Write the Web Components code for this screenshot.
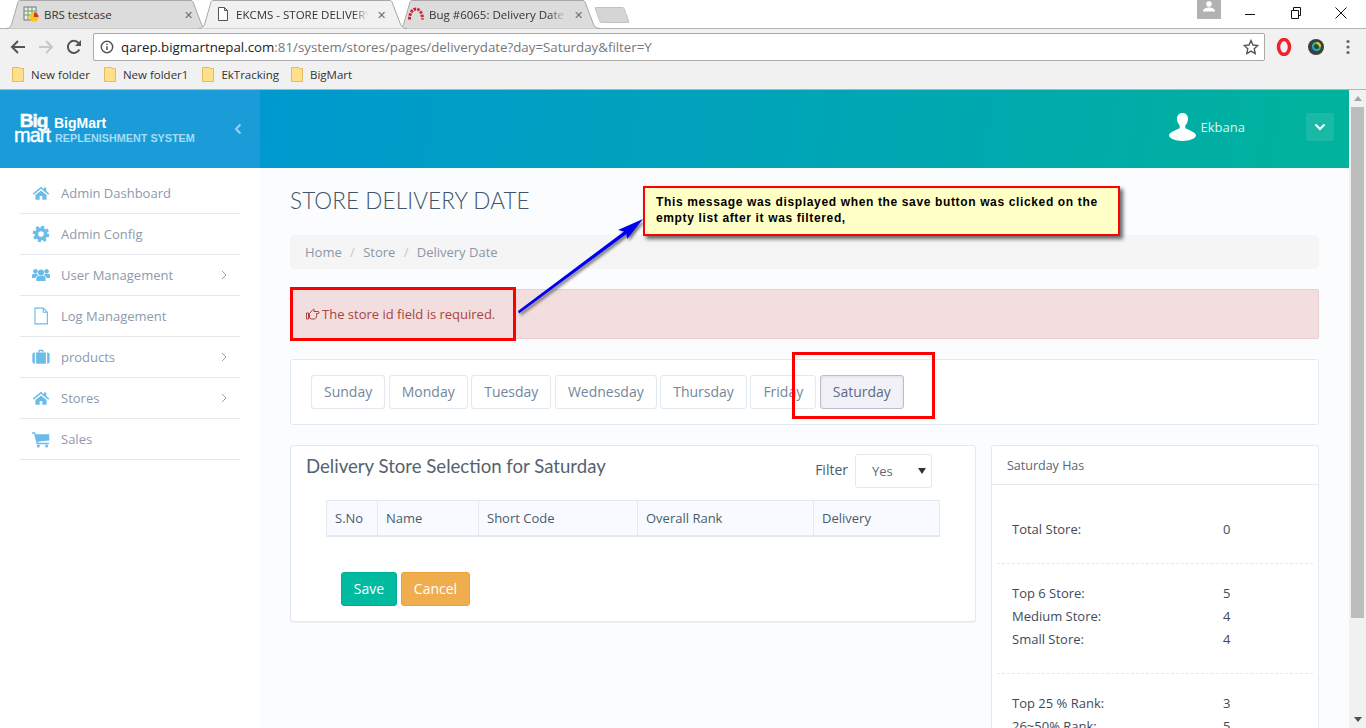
<!DOCTYPE html>
<html lang="en">
<head>
<meta charset="utf-8">
<title>EKCMS - STORE DELIVERY DATE</title>
<style>
  html, body { margin: 0; height: 728px; overflow: hidden; background: #fff; }
  body { font-family: "Open Sans", sans-serif; position: relative; }
  .page { display: flex; height: 638px; }
  .page-body { flex: 1; min-width: 0; display: flex; flex-direction: column; }
  .page-cols { flex: 1; min-height: 0; display: flex; }
</style>
</head>
<body>
<browser-chrome></browser-chrome>
<div class="page">
  <div class="page-body">
    <app-header></app-header>
    <div class="page-cols">
      <side-nav>
        <nav-item icon="home" label="Admin Dashboard"></nav-item>
        <nav-item icon="gear" label="Admin Config"></nav-item>
        <nav-item icon="users" label="User Management" arrow></nav-item>
        <nav-item icon="file" label="Log Management"></nav-item>
        <nav-item icon="case" label="products" arrow></nav-item>
        <nav-item icon="home" label="Stores" arrow></nav-item>
        <nav-item icon="cart" label="Sales"></nav-item>
      </side-nav>
      <main-area>
        <span slot="title">STORE DELIVERY DATE</span>
        <bread-crumb slot="crumb"></bread-crumb>
        <alert-bar slot="alert">The store id field is required.</alert-bar>
        <day-tabs slot="days" active="Saturday"></day-tabs>
        <store-panel slot="left"></store-panel>
        <stats-panel slot="right"></stats-panel>
      </main-area>
    </div>
  </div>
  <fake-scrollbar></fake-scrollbar>
</div>
<note-layer></note-layer>

<script>
const ICONS = {
  home: '<path d="M12 3.5 1 12.6l1.3 1.7L12 6.4l9.7 7.9 1.3-1.7-4-3.3V4.5h-3v2.4z"/><path d="M4.6 14.6V21h5.6v-5h3.6v5h5.6v-6.4L12 8.6z"/>',
  gear: '<circle cx="12" cy="12" r="6.2" fill="none" stroke="currentColor" stroke-width="5"/><circle cx="12" cy="12" r="9.4" fill="none" stroke="currentColor" stroke-width="3.4" stroke-dasharray="4.1 3.28"/>',
  users: '<circle cx="12" cy="8.5" r="4"/><path d="M5.8 20v-3.5c0-2.3 1.7-3.6 3.6-3.6h5.2c1.9 0 3.6 1.3 3.6 3.6V20z"/><circle cx="4.6" cy="7" r="3"/><circle cx="19.4" cy="7" r="3"/><path d="M0 16v-3c0-1.6 1.2-2.8 2.8-2.8h4c.3 1 .9 1.8 1.7 2.3-2.2.4-3.8 1.9-4 3.5zM24 16v-3c0-1.6-1.2-2.8-2.8-2.8h-4c-.3 1-.9 1.8-1.7 2.3 2.2.4 3.8 1.9 4 3.5z"/>',
  file: '<path d="M4 1.5h11l5.5 5.5v15.5H4z M15 1.5V7h5.5" fill="none" stroke="currentColor" stroke-width="1.5"/>',
  case: '<path d="M8.5 6V3.5c0-.8.5-1.3 1.3-1.3h4.4c.8 0 1.3.5 1.3 1.3V6h-1.8V4h-3.4v2z"/><path d="M5.5 6h13v15h-13z"/><path d="M3.8 6v15C1.8 21 .5 20 .5 18V9c0-2 1.3-3 3.3-3zM20.2 6v15c2 0 3.3-1 3.3-3V9c0-2-1.3-3-3.3-3z"/>',
  cart: '<path d="M0 3h4.2l.7 2.5H23v8.5L7.6 15.6l.4 1.4h14.5v2H6.3L2.8 5H0z"/><circle cx="8.5" cy="21.2" r="2"/><circle cx="19.5" cy="21.2" r="2"/>'
};

class BrowserChrome extends HTMLElement {
  constructor() {
    super();
    this.attachShadow({ mode: "open" });
  }

  Tab(title, icon, width, padLeft, padRight, active) {
    const fill = active ? "#f1f1f1" : "#dcdcdc";
    return `
      <div class="tab ${active ? "on" : ""}" style="width:${width}px;padding:0 ${padRight}px 0 ${padLeft}px">
        <svg class="shape" width="${width}" height="29" viewBox="0 0 ${width} 29">
          <path d="M0 28.5C4 28.5 5 26 6 23L12 2C12.5 1 13 .5 14 .5H${width - 17}C${width - 16} .5 ${width - 15.5} 1 ${width - 15} 2L${width - 7} 23C${width - 6} 26 ${width - 4} 28.5 ${width} 28.5" fill="${fill}" stroke="#a8a8a8"/>
        </svg>
        <span class="fav">${icon}</span>
        <span class="name">${title}</span>
        <span class="x">✕</span>
      </div>`;
  }

  connectedCallback() {
    const sheet = '<svg width="16" height="16" viewBox="0 0 16 16"><rect x="1" y="1" width="12" height="13" fill="#e8eee0" stroke="#777"/><path d="M1 5h12M5 1v13M9 1v13M1 9h12" stroke="#6d9c6a"/><circle cx="11" cy="11" r="4.5" fill="#f5c518"/><path d="M11 11V6.5a4.5 4.5 0 0 1 4.5 4.5z" fill="#d8322b"/></svg>';
    const page = '<svg width="16" height="16" viewBox="0 0 16 16"><path d="M3.5 1.5h6l3 3v10h-9zM9.5 1.5v3h3" fill="#fff" stroke="#555"/></svg>';
    const bug = '<svg width="16" height="16" viewBox="0 0 16 16"><path d="M1.5 13.5C1.5 7 4.5 3 8 3s6.5 4 6.5 10.500" fill="none" stroke="#c9242b" stroke-width="3" stroke-dasharray="2.6 1.1"/></svg>';
    const folder = '<svg width="12" height="15" viewBox="0 0 12 15"><path d="M.5.5h7l1 1h3v13H.5z" fill="#ffe08a" stroke="#e2bd5e"/></svg>';
    const mark = (t) => `<span class="mark">${folder}<span>${t}</span></span>`;
    this.shadowRoot.innerHTML = `
      <style>
        :host { display: block; height: 90px; font-family: "Open Sans", sans-serif; font-size: 11.5px; color: #333; background: #fff; }
        .strip { height: 28px; display: flex; padding-left: 6px; position: relative; }
        .strip::after { content: ""; position: absolute; left: 0; right: 0; bottom: -1px; height: 1px; background: #b4b4b4; }
        .tab { position: relative; height: 28px; margin-right: -9px; display: flex; align-items: center; box-sizing: border-box; gap: 5px; z-index: 1; }
        .tab.on { z-index: 3; }
        .shape { position: absolute; left: 0; top: 0; }
        .fav, .name, .x { position: relative; }
        .fav { width: 16px; height: 16px; flex: none; }
        .name { flex: 1; min-width: 0; white-space: nowrap; font-size: 11.5px; -webkit-mask-image: linear-gradient(90deg, #000 88%, transparent); mask-image: linear-gradient(90deg, #000 88%, transparent); }
        .tab:first-of-type .name { -webkit-mask-image: none; mask-image: none; }
        .x { color: #707070; font-size: 11px; flex: none; margin-left: 3px; }
        .newtab { width: 30px; height: 16px; margin: 7px 0 0 6px; background: #d5d5d5; border: 1px solid #c2c2c2; border-radius: 2px; transform: skewX(20deg); box-sizing: border-box; }
        .win { margin-left: auto; display: flex; height: 28px; padding-right: 2px; }
        .user { width: 24px; height: 19px; background: #b2b2b2; display: flex; justify-content: center; margin-right: 7px; }
        .ctl { width: 45.5px; display: flex; justify-content: center; padding-top: 7px; height: 16px; }
        .tools { height: 34px; padding-top: 3px; background: #f1f1f1; display: flex; align-items: center; position: relative; border-top: 1px solid #b4b4b4; box-sizing: border-box; }
        .nav { width: 93px; flex: none; display: flex; align-items: center; padding-left: 10px; gap: 12px; box-sizing: border-box; }
        .nav svg { flex: none; }
        .url { width: 1172px; box-sizing: border-box; height: 28px; background: #fff; border: 1px solid #aaa; border-radius: 2px; display: flex; align-items: center; padding: 0 5px 0 6px; font-size: 13.3px; color: #777; flex: none; }
        .url b { font-weight: 400; color: #222; }
        .url .addr { margin-left: 7px; flex: 1; white-space: nowrap; }
        .ext { display: flex; align-items: center; padding-left: 10px; gap: 14px; }
        .marks { height: 28px; background: #f1f1f1; border-bottom: 1px solid #b4b4b4; display: flex; align-items: center; box-sizing: border-box; padding: 0 0 3px 12px; }
        .mark { display: inline-flex; align-items: center; gap: 7px; margin-right: 14px; }
        .mark:nth-child(3) { margin-right: 12px; }
      </style>
      <div class="strip">
        ${this.Tab("BRS testcase", sheet, 202, 17, 15, false)}
        ${this.Tab("EKCMS - STORE DELIVERY", page, 208, 16, 21, true)}
        ${this.Tab("Bug #6065: Delivery Date", bug, 202, 10, 17, false)}
        <div class="newtab"></div>
        <div class="win">
          <div class="user"><svg width="12" height="12" viewBox="0 0 12 12" fill="#fff"><circle cx="6" cy="4" r="2.8"/><path d="M0 11.5c0-3 3-4 6-4s6 1 6 4z"/></svg></div>
          <div class="ctl"><svg width="12" height="12"><path d="M1 7.5h10" stroke="#111"/></svg></div>
          <div class="ctl"><svg width="12" height="12"><path d="M1.5 3.5h7v8h-7zM3.5 3.5v-3h7v8h-2" fill="none" stroke="#111"/></svg></div>
          <div class="ctl"><svg width="12" height="12"><path d="M.5.5l11 11M11.5.5l-11 11" stroke="#111"/></svg></div>
        </div>
      </div>
      <div class="tools">
        <div class="nav">
          <svg width="16" height="16" viewBox="0 0 16 16"><path d="M15 8H2M8 2 2 8l6 6" fill="none" stroke="#555" stroke-width="2"/></svg>
          <svg width="16" height="16" viewBox="0 0 16 16"><path d="M1 8h13M8 2l6 6-6 6" fill="none" stroke="#c8c8c8" stroke-width="2"/></svg>
          <svg width="16" height="16" viewBox="0 0 16 16"><path d="M13.3 10.5A6 6 0 1 1 12.5 4L14 5.5" fill="none" stroke="#555" stroke-width="2"/><path d="M15 1v6H9z" fill="#555"/></svg>
        </div>
        <div class="url">
          <svg width="14" height="14" viewBox="0 0 16 16" style="flex:none"><circle cx="8" cy="8" r="6.5" fill="none" stroke="#555" stroke-width="1.7"/><path d="M8 7v4.5M8 4.2v1.6" stroke="#555" stroke-width="1.8"/></svg>
          <span class="addr"><b>qarep.bigmartnepal.com</b>:81/system/stores/pages/deliverydate?day=Saturday&amp;filter=Y</span>
          <svg width="16" height="16" viewBox="0 0 16 16"><path d="m8 1.5 2 4.5 4.8.5-3.6 3.2 1 4.8L8 12.1 3.8 14.5l1-4.8L1.2 6.5 6 6z" fill="none" stroke="#555" stroke-width="1.4"/></svg>
        </div>
        <div class="ext">
          <svg width="18" height="18" viewBox="0 0 18 18"><ellipse cx="9" cy="9" rx="5.5" ry="7.5" fill="none" stroke="#f0222d" stroke-width="3.5"/></svg>
          <svg width="18" height="18" viewBox="0 0 18 18"><circle cx="9" cy="9" r="8" fill="#3a3f45"/><circle cx="9.5" cy="8.5" r="3.6" fill="none" stroke="#27c46b" stroke-width="2"/><path d="M9.5 5A3.6 3.6 0 0 1 13 8.5" fill="none" stroke="#f2c21b" stroke-width="2"/><path d="M6 8.5A3.6 3.6 0 0 0 9 12" fill="none" stroke="#2a8fe8" stroke-width="2"/></svg>
          <svg width="4" height="16" viewBox="0 0 4 16" style="margin-left:7px" fill="#666"><circle cx="2" cy="2.5" r="1.6"/><circle cx="2" cy="8" r="1.6"/><circle cx="2" cy="13.5" r="1.6"/></svg>
        </div>
      </div>
      <div class="marks">
        ${mark("New folder")}${mark("New folder1")}${mark("EkTracking")}${mark("BigMart")}
      </div>`;
  }
}

class AppHeader extends HTMLElement {
  constructor() {
    super();
    this.attachShadow({ mode: "open" });
  }

  connectedCallback() {
    this.shadowRoot.innerHTML = `
      <style>
        :host { display: flex; height: 78px; flex: none; background: linear-gradient(100deg, #0098d2 15%, #00a8b0 70%, #00b39b 100%); color: #fff; }
        .brand { width: 260px; flex: none; box-sizing: border-box; background: #1b9cd9; display: flex; align-items: center; padding-left: 13px; }
        .logo { width: 38px; margin-right: 3px; padding-bottom: 3px; font: 700 19px/14px "Liberation Sans", sans-serif; letter-spacing: -1px; text-align: center; flex: none; }
        .logo span { display: block; }
        .logo .big { padding-left: 3px; -webkit-text-stroke: .5px #fff; }
        .logo .mart { font-weight: 400; font-size: 20px; letter-spacing: -1px; -webkit-text-stroke: .4px #fff; white-space: nowrap; }
        .words { padding-top: 2px; font-family: "Liberation Sans", sans-serif; font-weight: 700; }
        .words b { display: block; font-size: 14px; line-height: 15px; }
        .words small { display: block; font-size: 10.8px; line-height: 14px; padding-left: 1px; color: #a5dcf5; }
        .fold { margin-left: 39px; color: rgba(255,255,255,.55); display: flex; }
        .right { margin-left: auto; display: flex; align-items: center; padding: 0 15px 4px 0; }
        .name { font-size: 13px; color: #dff7f1; margin-left: 5px; margin-right: 61px; }
        .drop { width: 28px; height: 28px; border-radius: 3px; background: rgba(255,255,255,.1); display: flex; align-items: center; justify-content: center; }
      </style>
      <div class="brand">
        <div class="logo"><span class="big">Big</span><span class="mart">mart</span></div>
        <div class="words"><b>BigMart</b><small>REPLENISHMENT SYSTEM</small></div>
        <span class="fold"><svg width="8" height="12" viewBox="0 0 8 12"><path d="M6.5 1.5 2 6l4.5 4.5" fill="none" stroke="currentColor" stroke-width="2"/></svg></span>
      </div>
      <div class="right">
        <svg width="27" height="28" viewBox="0 0 27 28" fill="#fff"><path d="M13.5 0c3.5 0 5.5 2.5 5.5 5.8 0 2.7-1.2 5-2.7 6.700v2.300c0 1.700 10.700 3.700 10.700 7.500 0 3.200-6.500 5.700-13.500 5.700S0 25.500 0 22.300c0-3.800 10.700-5.800 10.700-7.500v-2.300C9.200 10.800 8 8.500 8 5.800 8 2.500 10 0 13.500 0z"/></svg>
        <span class="name">Ekbana</span>
        <span class="drop"><svg width="12" height="8" viewBox="0 0 12 8"><path d="M1.500 1.500 6 6l4.500-4.500" fill="none" stroke="#fff" stroke-width="2"/></svg></span>
      </div>`;
  }
}

class SideNav extends HTMLElement {
  constructor() {
    super();
    this.attachShadow({ mode: "open" });
    this.shadowRoot.innerHTML = `
      <style>
        :host { display: block; width: 260px; flex: none; background: #fff; box-sizing: border-box; padding: 5px 20px 0; }
      </style>
      <slot></slot>`;
  }
}

class NavItem extends HTMLElement {
  static get observedAttributes() {
    return ["icon", "label"];
  }

  constructor() {
    super();
    this.attachShadow({ mode: "open" });
  }

  connectedCallback() {
    const arrow = this.hasAttribute("arrow")
      ? '<svg class="more" width="6" height="10" viewBox="0 0 6 10"><path d="M1 1l4 4-4 4" fill="none" stroke="#98a2af" stroke-width="1"/></svg>'
      : "";
    this.shadowRoot.innerHTML = `
      <style>
        :host { display: flex; align-items: center; height: 41px; box-sizing: border-box; border-bottom: 1px solid #e4e9f0; color: #8d9aac; font-size: 13px; padding-left: 12px; }
        .ico { width: 18px; height: 18px; fill: #6bbce9; color: #6bbce9; flex: none; }
        .txt { margin-left: 11px; flex: 1; }
        .more { margin-right: 13px; }
      </style>
      <svg class="ico" viewBox="0 0 24 24">${ICONS[this.getAttribute("icon")]}</svg>
      <span class="txt">${this.getAttribute("label")}</span>
      ${arrow}`;
  }
}

class MainArea extends HTMLElement {
  constructor() {
    super();
    this.attachShadow({ mode: "open" });
    this.shadowRoot.innerHTML = `
      <style>
        :host { display: block; flex: 1; min-width: 0; overflow: hidden; background: #fbfcfe; padding: 0 30px; box-sizing: border-box; }
        h1 { font: 300 22.5px/32px Lato, sans-serif; color: #3f5468; margin: 17px 0 18px; letter-spacing: .1px; }
        .cols { display: flex; gap: 15px; align-items: flex-start; margin-top: 20px; }
        ::slotted([slot="left"]) { flex: 1; min-width: 0; }
        ::slotted([slot="right"]) { width: 328px; flex: none; }
      </style>
      <h1><slot name="title"></slot></h1>
      <slot name="crumb"></slot>
      <slot name="alert"></slot>
      <slot name="days"></slot>
      <div class="cols"><slot name="left"></slot><slot name="right"></slot></div>`;
  }
}

class BreadCrumb extends HTMLElement {
  constructor() {
    super();
    this.attachShadow({ mode: "open" });
    this.shadowRoot.innerHTML = `
      <style>
        :host { display: flex; align-items: center; height: 34px; background: #f5f5f5; border-radius: 4px; padding-left: 15px; font-size: 13px; color: #8a97a8; }
        i { font-style: normal; color: #c4c8cd; margin: 0 8.3px; }
      </style>
      <span>Home</span><i>/</i><span>Store</span><i>/</i><span>Delivery Date</span>`;
  }
}

class AlertBar extends HTMLElement {
  constructor() {
    super();
    this.attachShadow({ mode: "open" });
    this.shadowRoot.innerHTML = `
      <style>
        :host { display: flex; align-items: center; height: 50px; box-sizing: border-box; margin-top: 20px; background: #f2dede; border: 1px solid #ebccd1; border-radius: 2px; padding-left: 15px; font-size: 13px; color: #a94442; }
        svg { margin-right: 2px; flex: none; }
      </style>
      <svg width="14" height="12" viewBox="0 0 14 12"><path d="M.5 5h2v6h-2zM3.5 5.5 7 1.5c.6-.6 1.5-.3 1.3.6L7.800 3.500H12c1.500 0 1.500 2 0 2H10.500c.4 2.500 0 5-2 5.500H5.500L3.500 10z" fill="none" stroke="#a94442"/></svg>
      <slot></slot>`;
  }
}

class DayTabs extends HTMLElement {
  static get observedAttributes() {
    return ["active"];
  }

  constructor() {
    super();
    this.attachShadow({ mode: "open" });
  }

  connectedCallback() {
    const days = ["Sunday", "Monday", "Tuesday", "Wednesday", "Thursday", "Friday", "Saturday"];
    const active = this.getAttribute("active");
    this.shadowRoot.innerHTML = `
      <style>
        :host { display: flex; gap: 3.5px; height: 66px; margin-top: 20px; box-sizing: border-box; background: #fff; border: 1px solid #e3e9f1; border-radius: 3px; padding: 15px 20px; }
        span { box-sizing: border-box; height: 34px; padding: 0 12px 2px; display: flex; align-items: center; background: #fff; border: 1px solid #e3e9f1; border-radius: 3px; font-size: 14px; color: #73879c; }
        span.on { background: #f2f1f8; border-color: #b9bfca; color: #5a6c80; box-shadow: inset 0 1px 3px rgba(0,0,0,.08); }
      </style>
      ${days.map((d) => `<span class="${d === active ? "on" : ""}">${d}</span>`).join("")}`;
  }
}

class StorePanel extends HTMLElement {
  constructor() {
    super();
    this.attachShadow({ mode: "open" });
  }

  connectedCallback() {
    this.shadowRoot.innerHTML = `
      <style>
        :host { display: block; box-sizing: border-box; height: 177px; background: #fff; border: 1px solid #e3e9f1; border-radius: 3px; box-shadow: 0 1px 1px rgba(0,0,0,.05); padding: 8px 43px 0 15px; font-size: 14px; color: #4b5a6b; }
        .top { display: flex; align-items: flex-start; height: 46px; }
        h2 { font: 400 18.6px/24px Lato, sans-serif; color: #55626f; margin: 0; flex: 1; }
        label { margin: 6px 7px 0 0; color: #4b5a6b; }
        .sel { width: 77px; height: 34px; box-sizing: border-box; border: 1px solid #e3e9f1; border-radius: 3px; display: flex; align-items: center; justify-content: space-between; padding: 0 5px 0 16px; font-size: 13px; color: #5d6b7b; }
        .sel svg { flex: none; }
        table { border-collapse: collapse; margin-left: 20px; width: 613px; table-layout: fixed; }
        th { height: 35px; padding: 0 8px; box-sizing: border-box; text-align: left; font-weight: 400; font-size: 13px; color: #4b5a6b; background: #f8faff; border: 1px solid #e3e9f1; border-bottom: 2px solid #e3e9f1; }
        .btns { display: flex; gap: 4px; margin: 35px 0 0 35px; }
        button { height: 34px; box-sizing: border-box; padding: 0; border-radius: 3px; border: 1px solid; color: #fff; font: 400 14px "Open Sans", sans-serif; }
        .save { background: #00bb9f; border-color: #00ad93; width: 56px; }
        .cancel { background: #f0ad4e; border-color: #eea236; width: 69px; }
      </style>
      <div class="top">
        <h2>Delivery Store Selection for Saturday</h2>
        <label>Filter</label>
        <div class="sel">Yes<svg width="8" height="6" viewBox="0 0 8 6"><path d="M0 0h8L4 6z" fill="#333"/></svg></div>
      </div>
      <table>
        <colgroup><col style="width:51px"><col style="width:101px"><col style="width:159px"><col style="width:176px"><col style="width:126px"></colgroup>
        <tr><th>S.No</th><th>Name</th><th>Short Code</th><th>Overall Rank</th><th>Delivery</th></tr>
      </table>
      <div class="btns"><button class="save">Save</button><button class="cancel">Cancel</button></div>`;
  }
}

class StatsPanel extends HTMLElement {
  constructor() {
    super();
    this.attachShadow({ mode: "open" });
  }

  Row(label, value) {
    return `<div class="row"><span>${label}</span><span>${value}</span></div>`;
  }

  connectedCallback() {
    this.shadowRoot.innerHTML = `
      <style>
        :host { display: block; box-sizing: border-box; height: 340px; background: #fff; border: 1px solid #e3e9f1; border-bottom: 0; border-radius: 3px 3px 0 0; font-size: 13px; color: #3f4a57; }
        .head { height: 38px; display: flex; align-items: center; padding-left: 15px; border-bottom: 1px solid #e3e9f1; color: #5a6675; font-size: 12.5px; }
        .group { margin: 0 5px; padding: 32px 15px 23px; border-bottom: 1px dashed #e3e9f1; }
        .group + .group { padding-top: 17px; padding-bottom: 23px; }
        .group.last { border-bottom: 0; }
        .row { display: grid; grid-template-columns: 211px 1fr; height: 23px; align-items: center; }
      </style>
      <div class="head">Saturday Has</div>
      <div class="group">${this.Row("Total Store:", "0")}</div>
      <div class="group">${this.Row("Top 6 Store:", "5")}${this.Row("Medium Store:", "4")}${this.Row("Small Store:", "4")}</div>
      <div class="group last">${this.Row("Top 25 % Rank:", "3")}${this.Row("26~50% Rank:", "5")}</div>`;
  }
}

class FakeScrollbar extends HTMLElement {
  constructor() {
    super();
    this.attachShadow({ mode: "open" });
    this.shadowRoot.innerHTML = `
      <style>
        :host { display: flex; flex-direction: column; width: 17px; flex: none; background: #f1f1f1; }
        .btn { height: 17px; flex: none; display: flex; align-items: center; justify-content: center; }
        .thumb { height: 511px; margin: 0 2px; background: #bdbdbd; flex: none; }
        .gap { flex: 1; }
      </style>
      <div class="btn"><svg width="8" height="5"><path d="M0 5 4 0l4 5z" fill="#a3a3a3"/></svg></div>
      <div class="thumb"></div>
      <div class="gap"></div>
      <div class="btn"><svg width="8" height="5"><path d="M0 0l4 5 4-5z" fill="#505050"/></svg></div>`;
  }
}

class NoteLayer extends HTMLElement {
  constructor() {
    super();
    this.attachShadow({ mode: "open" });
    this.shadowRoot.innerHTML = `
      <style>
        :host { position: absolute; left: 0; top: 0; width: 1366px; height: 728px; pointer-events: none; }
        .box { position: absolute; box-sizing: border-box; border: 3px solid #f00; }
        .call { position: absolute; left: 643px; top: 186px; width: 477px; height: 50px; box-sizing: border-box; background: #ffffc6; border: 2px solid #f00; box-shadow: 3px 3px 4px rgba(0,0,0,.6); padding: 6px 10px 0 11px; font: 700 12px/16px "Liberation Sans", sans-serif; letter-spacing: .64px; color: #000; }
        svg { position: absolute; left: 0; top: 0; }
      </style>
      <svg width="1366" height="728">
        <defs><filter id="s" x="-20%" y="-20%" width="140%" height="140%"><feDropShadow dx="2" dy="2" stdDeviation="1.5" flood-color="#000" flood-opacity=".55"/></filter></defs>
        <path d="M518 311 624 231.5 618 230 643 219 627 239 626.5 234 519 313.5z" fill="#0000f0" filter="url(#s)"/>
      </svg>
      <div class="box" style="left:290px;top:287px;width:226px;height:54px"></div>
      <div class="box" style="left:792px;top:352px;width:143px;height:67px"></div>
      <div class="call">This message was displayed when the save button was clicked on the empty list after it was filtered,</div>`;
  }
}

customElements.define("browser-chrome", BrowserChrome);
customElements.define("app-header", AppHeader);
customElements.define("side-nav", SideNav);
customElements.define("nav-item", NavItem);
customElements.define("main-area", MainArea);
customElements.define("bread-crumb", BreadCrumb);
customElements.define("alert-bar", AlertBar);
customElements.define("day-tabs", DayTabs);
customElements.define("store-panel", StorePanel);
customElements.define("stats-panel", StatsPanel);
customElements.define("fake-scrollbar", FakeScrollbar);
customElements.define("note-layer", NoteLayer);
</script>
</body>
</html>
